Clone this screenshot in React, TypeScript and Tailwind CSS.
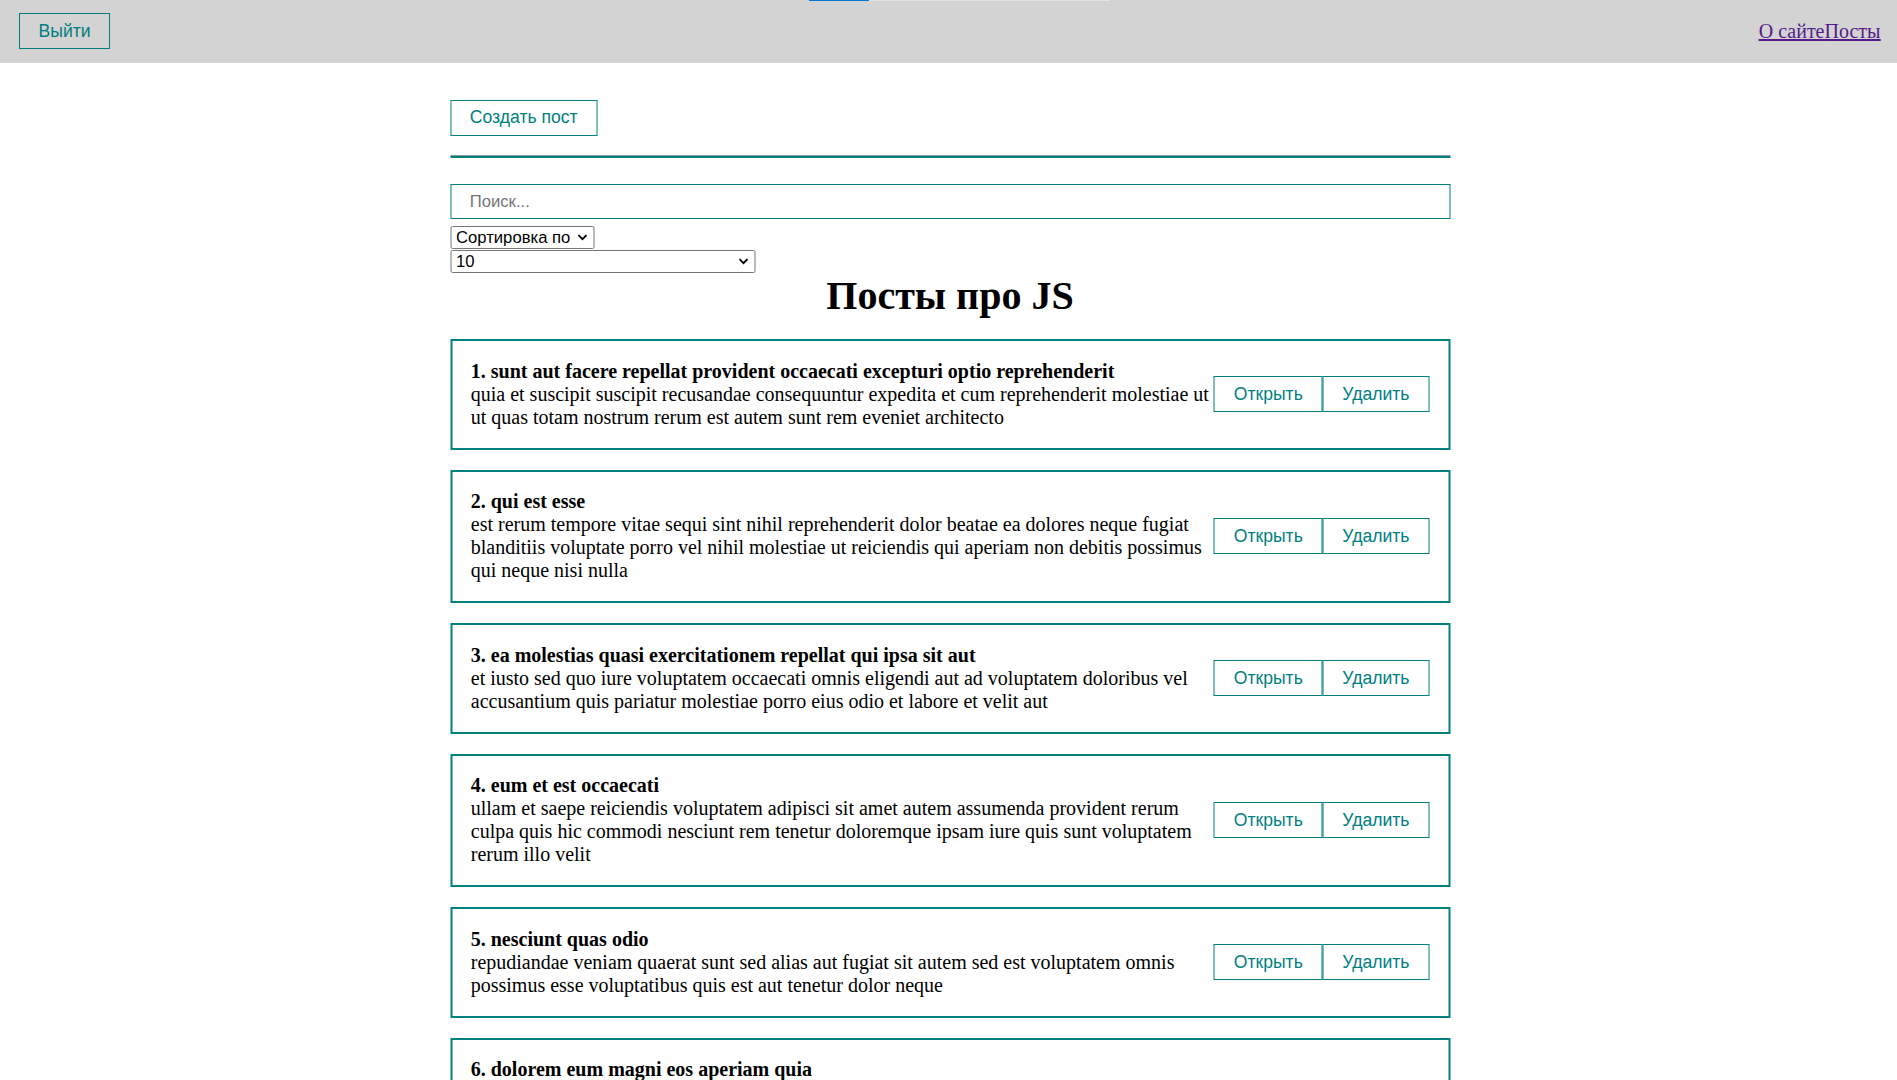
import React from 'react'

const posts = [
  {
    id: 1,
    title: 'sunt aut facere repellat provident occaecati excepturi optio reprehenderit',
    body: 'quia et suscipit suscipit recusandae consequuntur expedita et cum reprehenderit molestiae ut ut quas totam nostrum rerum est autem sunt rem eveniet architecto',
  },
  {
    id: 2,
    title: 'qui est esse',
    body: 'est rerum tempore vitae sequi sint nihil reprehenderit dolor beatae ea dolores neque fugiat blanditiis voluptate porro vel nihil molestiae ut reiciendis qui aperiam non debitis possimus qui neque nisi nulla',
  },
  {
    id: 3,
    title: 'ea molestias quasi exercitationem repellat qui ipsa sit aut',
    body: 'et iusto sed quo iure voluptatem occaecati omnis eligendi aut ad voluptatem doloribus vel accusantium quis pariatur molestiae porro eius odio et labore et velit aut',
  },
  {
    id: 4,
    title: 'eum et est occaecati',
    body: 'ullam et saepe reiciendis voluptatem adipisci sit amet autem assumenda provident rerum culpa quis hic commodi nesciunt rem tenetur doloremque ipsam iure quis sunt voluptatem rerum illo velit',
  },
  {
    id: 5,
    title: 'nesciunt quas odio',
    body: 'repudiandae veniam quaerat sunt sed alias aut fugiat sit autem sed est voluptatem omnis possimus esse voluptatibus quis est aut tenetur dolor neque',
  },
  {
    id: 6,
    title: 'dolorem eum magni eos aperiam quia',
    body: 'ut aspernatur corporis harum nihil quis provident sequi mollitia nobis aliquid molestiae perspiciatis et ea nemo ab reprehenderit accusantium quas voluptate dolores velit et doloremque molestiae',
  },
]

function MyButton({ children }: { children: React.ReactNode }) {
  return (
    <button className="border border-[#008080] bg-transparent px-[18.75px] py-[6.25px] font-['Liberation_Sans',Arial,sans-serif] text-[17.6px] leading-[21.5px] text-[#008080]">
      {children}
    </button>
  )
}

function Chevron() {
  return (
    <svg
      className="pointer-events-none absolute right-[7px] top-[8px]"
      width="10"
      height="7"
      viewBox="0 0 10 7"
      fill="none"
    >
      <path d="M1 1.2 L5 5.2 L9 1.2" stroke="#000" strokeWidth="1.9" />
    </svg>
  )
}

export default function App() {
  return (
    <div className="relative min-h-screen bg-white font-['Liberation_Serif','Times_New_Roman',serif] text-[20px] leading-[23px] text-black">
      {/* thin loading bar on top */}
      <div className="absolute left-[809px] top-0 flex h-px w-[301px] bg-[#e3e3e3]">
        <div className="h-px w-[60px] bg-[#0078d4]"></div>
      </div>

      <div className="flex h-[62.5px] items-center justify-between bg-[#d3d3d3] pl-[18.75px] pr-[16.5px]">
        <MyButton>Выйти</MyButton>
        <div className="text-[#551a8b] underline">
          <a href="#">О сайте</a>
          <a href="#">Посты</a>
        </div>
      </div>

      <div className="mx-auto w-[1000px] translate-x-[1.5px]">
        <div className="mt-[37.5px]">
          <MyButton>Создать пост</MyButton>
        </div>

        <div className="mt-[19px]">
          <div className="h-px bg-[#8a9a9a]"></div>
          <div className="h-[2px] bg-[#008080]"></div>
        </div>

        <input
          className="mt-[26px] block h-[35px] w-full border border-[#008080] px-[18.75px] font-['Liberation_Sans',Arial,sans-serif] text-[16.67px] outline-none placeholder:text-[#757575]"
          placeholder="Поиск..."
        />

        <div className="mt-[7px] flex flex-col items-start gap-px font-['Liberation_Sans',Arial,sans-serif] text-[16.67px] leading-[19px]">
          <div className="relative">
            <select
              defaultValue=""
              className="block h-[23px] w-[144px] appearance-none rounded-[2px] border border-[#767676] bg-white pl-[5px] text-black"
            >
              <option value="" disabled>
                Сортировка по
              </option>
              <option value="title">По названию</option>
              <option value="body">По описанию</option>
            </select>
            <Chevron />
          </div>
          <div className="relative">
            <select
              defaultValue="10"
              className="block h-[23px] w-[305px] appearance-none rounded-[2px] border border-[#767676] bg-white pl-[5px] text-black"
            >
              <option value="5">5</option>
              <option value="10">10</option>
              <option value="25">25</option>
              <option value="-1">Показать все</option>
            </select>
            <Chevron />
          </div>
        </div>

        <h1 className="text-center text-[40px] leading-[46px] font-bold">Посты про JS</h1>

        <div className="pb-[20px]">
          {posts.map((post) => (
            <div
              key={post.id}
              className="mt-[20px] flex items-center border-2 border-[#008080] p-[18.75px]"
            >
              <div className="flex-1">
                <strong>
                  {post.id}. {post.title}
                </strong>
                <div>{post.body}</div>
              </div>
              <div className="flex shrink-0">
                <MyButton>Открыть</MyButton>
                <MyButton>Удалить</MyButton>
              </div>
            </div>
          ))}
        </div>
      </div>
    </div>
  )
}
